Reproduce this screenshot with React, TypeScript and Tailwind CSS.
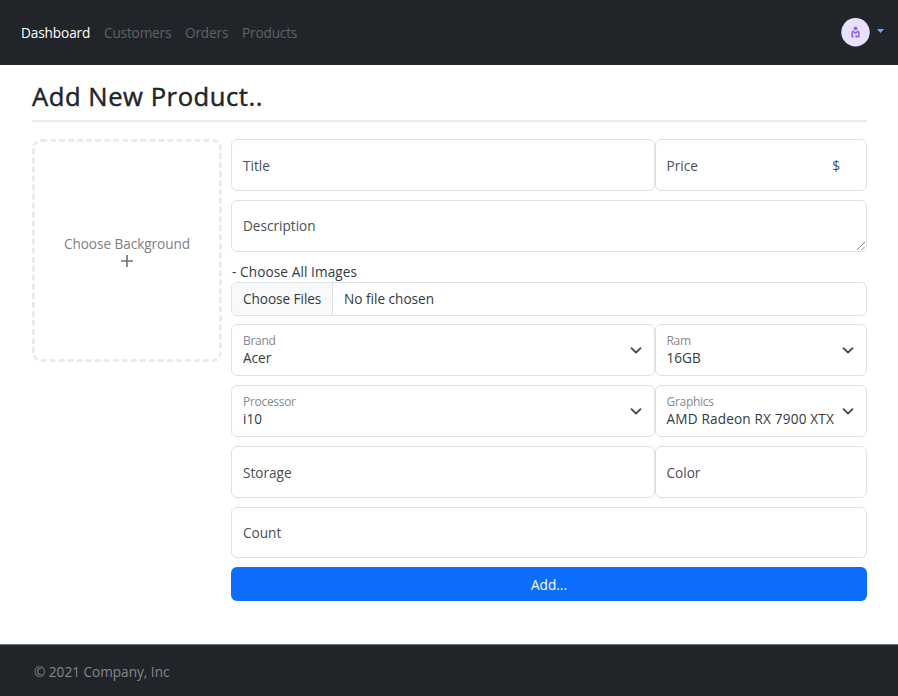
import type { ReactNode } from 'react';

const box = 'rounded-[6px] border border-[#dee2e6] bg-white';

function Chevron() {
  return (
    <svg className="mr-[1px] h-[12px] w-[12px] shrink-0" viewBox="0 0 16 16" fill="none" stroke="#43494f" strokeWidth="2.5" strokeLinecap="round" strokeLinejoin="round">
      <path d="m2 5.5 6 6 6-6" />
    </svg>
  );
}

function Field({ label, className = '', children }: { label: string; className?: string; children?: ReactNode }) {
  return (
    <div className={`flex h-[51.9px] items-center px-[11px] pt-[0.6px] text-[#4a4f54] ${box} ${className}`}>
      <span>{label}</span>
      {children}
    </div>
  );
}

function SelectField({ label, value, valueClass = '' }: { label: string; value: string; valueClass?: string }) {
  return (
    <div className={`flex h-[51.9px] items-center justify-between pr-[11px] pl-[11px] ${box}`}>
      <div className="pb-[2px] whitespace-nowrap">
        <div className="text-[12px] leading-[17px] tracking-[-0.3px] text-[#868a8e]">{label}</div>
        <div className={`leading-[18px] ${valueClass}`}>{value}</div>
      </div>
      <Chevron />
    </div>
  );
}

const row = 'grid grid-cols-[423.5px_212.5px]';

export default function App() {
  return (
    <div className="flex h-[696px] w-full flex-col overflow-hidden bg-white font-['Open_Sans','Noto_Sans',sans-serif] text-[13.6px] leading-[21px] text-[#343a40]">
      <header className="flex h-[65px] shrink-0 items-center justify-between bg-[#212529] pr-[14px] pl-[21px]">
        <nav className="flex gap-[14px] text-[#5c636a]">
          <a className="w-[69px] whitespace-nowrap tracking-[-0.1px] text-white">Dashboard</a>
          <a className="w-[67px] whitespace-nowrap tracking-[-0.15px]">Customers</a>
          <a className="w-[43px] whitespace-nowrap tracking-[-0.15px]">Orders</a>
          <a className="tracking-[-0.15px]">Products</a>
        </nav>
        <div className="flex items-center gap-[7px]">
          <svg className="h-[29px] w-[29px]" viewBox="0 0 29 29">
            <circle cx="14.5" cy="14.2" r="14.2" fill="#e9e0fd" />
            <circle cx="14.5" cy="10.4" r="1.9" fill="#8b68ee" />
            <path d="M12.7 18.8h-1.5v-3.8q0-1.6 1-1.6l2.3 1.8 2.3-1.8q1 0 1 1.6v3.8h-2.6v-1.8" fill="none" stroke="#8b68ee" strokeWidth="1.6" strokeLinejoin="round" />
          </svg>
          <svg className="mt-[-4px] h-[4px] w-[7px]" viewBox="0 0 7 4">
            <path d="M0 0h7L3.5 4z" fill="#6ea8fe" />
          </svg>
        </div>
      </header>

      <main className="flex-1 px-[32px] pt-[15px]">
        <h1 className="h-[39.5px] text-[25.6px] leading-[34px] font-medium tracking-[0.55px] text-[#212529] [-webkit-text-stroke:0.45px_#212529]">Add New Product..</h1>
        <div className="h-[2px] w-[835px] bg-[#e9eaec]" />

        <div className="mt-[17.5px] flex gap-[9px]">
          <div className="flex h-[223px] w-[190px] shrink-0 flex-col items-center justify-center rounded-[9px] border-[3px] border-dashed border-[#ebebeb] text-[#808080]">
            <span className="leading-[20px] tracking-[-0.05px]">Choose Background</span>
            <svg className="mt-[1px] h-[12px] w-[12px]" viewBox="0 0 12 12" stroke="#707070" strokeWidth="1.6">
              <path d="M6 0v12M0 6h12" />
            </svg>
          </div>

          <form className="flex w-[636px] flex-col gap-[8.8px]">
            <div className={row}>
              <Field label="Title" />
              <Field label="Price" className="justify-between pr-[26px]">
                <span>$</span>
              </Field>
            </div>

            <Field label="Description" className="relative">
              <svg className="absolute right-[1px] bottom-[1px] h-[8px] w-[8px]" viewBox="0 0 8 8" stroke="#777" strokeWidth="0.9">
                <path d="M0 8 8 0M4.5 8 8 4.5" />
              </svg>
            </Field>

            <div>
              <div className="h-[21.3px] pt-[0.8px] pl-[1px] tracking-[0.1px]">- Choose All Images</div>
              <div className={`flex h-[34px] items-center overflow-hidden ${box}`}>
                <span className="flex h-full w-[101px] items-center border-r border-[#dee2e6] bg-[#f8f9fa] pl-[11px] tracking-[-0.05px]">Choose Files</span>
                <span className="pl-[11px]">No file chosen</span>
              </div>
            </div>

            <div className={row}>
              <SelectField label="Brand" value="Acer" />
              <SelectField label="Ram" value="16GB" />
            </div>
            <div className={row}>
              <SelectField label="Processor" value="i10" />
              <SelectField label="Graphics" value="AMD Radeon RX 7900 XTX" valueClass="tracking-[0.17px]" />
            </div>
            <div className={row}>
              <Field label="Storage" />
              <Field label="Color" />
            </div>
            <Field label="Count" />
            <button type="button" className="h-[34px] rounded-[6px] bg-[#0d6efd] text-white">
              Add...
            </button>
          </form>
        </div>
      </main>

      <footer className="flex h-[52px] shrink-0 items-center border-t border-[#6c757d] bg-[#212529] pt-[1px] pl-[34px] text-[#83888d]">
        © 2021 Company, Inc
      </footer>
    </div>
  );
}
